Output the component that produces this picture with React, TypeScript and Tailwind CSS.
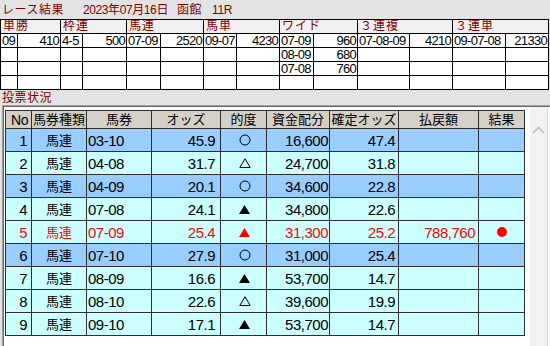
import React from "react";

const FONT = { fontFamily: '"Liberation Sans", "Noto Sans CJK JP", sans-serif' };

const topHeaders = ["単勝", "枠連", "馬連", "馬単", "ワイド", "３連複", "３連単"];
const topRows: string[][] = [
  ["09", "410", "4-5", "500", "07-09", "2520", "09-07", "4230", "07-09", "960", "07-08-09", "4210", "09-07-08", "21330"],
  ["", "", "", "", "", "", "", "", "08-09", "680", "", "", "", ""],
  ["", "", "", "", "", "", "", "", "07-08", "760", "", "", "", ""],
  ["", "", "", "", "", "", "", "", "", "", "", "", "", ""],
];

type Mark = "o" | "tri" | "fill";
type Row = { no: number; horse: string; odds: string; mark: Mark; money: string; fixed: string; pay?: string; hit?: boolean; blue: boolean };

const rows: Row[] = [
  { no: 1, horse: "03-10", odds: "45.9", mark: "o", money: "16,600", fixed: "47.4", blue: true },
  { no: 2, horse: "04-08", odds: "31.7", mark: "tri", money: "24,700", fixed: "31.8", blue: false },
  { no: 3, horse: "04-09", odds: "20.1", mark: "o", money: "34,600", fixed: "22.8", blue: true },
  { no: 4, horse: "07-08", odds: "24.1", mark: "fill", money: "34,800", fixed: "22.6", blue: false },
  { no: 5, horse: "07-09", odds: "25.4", mark: "fill", money: "31,300", fixed: "25.2", pay: "788,760", hit: true, blue: false },
  { no: 6, horse: "07-10", odds: "27.9", mark: "o", money: "31,000", fixed: "25.4", blue: true },
  { no: 7, horse: "08-09", odds: "16.6", mark: "fill", money: "53,700", fixed: "14.7", blue: false },
  { no: 8, horse: "08-10", odds: "22.6", mark: "tri", money: "39,600", fixed: "19.9", blue: false },
  { no: 9, horse: "09-10", odds: "17.1", mark: "fill", money: "53,700", fixed: "14.7", blue: false },
];

function MarkIcon({ mark, red }: { mark: Mark; red: boolean }) {
  const c = red ? "#ff0000" : "#000000";
  if (mark === "o")
    return (
      <svg width="12" height="12" viewBox="0 0 12 12">
        <circle cx="6" cy="6" r="5" fill="none" stroke={c} strokeWidth="1" />
      </svg>
    );
  if (mark === "tri")
    return (
      <svg width="12" height="10" viewBox="0 0 12 10">
        <polygon points="6,0.8 11.2,9.5 0.8,9.5" fill="none" stroke={c} strokeWidth="1" />
      </svg>
    );
  return (
    <svg width="11" height="9" viewBox="0 0 11 9">
      <polygon points="5.5,0 11,9 0,9" fill={c} />
    </svg>
  );
}

export default function App() {
  return (
    <div className="w-[550px] h-[346px] overflow-hidden bg-[#e3e3e3] flex flex-col" style={FONT}>
      {/* title row */}
      <div className="h-[19px] flex items-center text-[#800000] text-[12px] leading-none">
        <span className="w-[83px] pl-[2px] tracking-[0.5px]">レース結果</span>
        <span className="tracking-[-0.4px]">2023年07月16日</span>
        <span className="ml-[9px] tracking-[0.5px]">函館</span>
        <span className="ml-[10px] tracking-[-0.3px]">11R</span>
      </div>

      {/* top result table */}
      <div className="w-[549px] grid grid-cols-[16px_42px_21px_43px_33px_42px_32px_42px_33px_43px_51px_42px_52px_42px] grid-rows-[13px_13px_13px_13px_13px] gap-px bg-black p-px">
        {topHeaders.map((h) => (
          <div key={h} className="col-span-2 bg-[#f0f0f0] text-[#800000] text-[12px] leading-[13px] pl-[2px] tracking-[1px] whitespace-nowrap overflow-hidden">
            {h}
          </div>
        ))}
        {topRows.map((r, ri) =>
          r.map((v, ci) => (
            <div
              key={`${ri}-${ci}`}
              className={`bg-white text-black text-[13px] leading-[13px] tracking-[-0.7px] whitespace-nowrap overflow-hidden ${ci % 2 === 0 ? "text-left pl-px" : "text-right pr-px"}`}
            >
              {v}
            </div>
          ))
        )}
      </div>

      {/* label */}
      <div className="h-[14px] mt-px flex items-center text-[#800000] text-[12px] leading-none pl-[2px] tracking-[0.5px]">
        投票状況
      </div>

      {/* panel */}
      <div className="flex-1 ml-[2px] border-l border-t border-[#a0a0a0] flex">
        <div className="flex-1 border-l border-t border-[#696969] bg-white flex">
          <div className="pl-px pt-[3px]">
            <div className="w-[520px] grid grid-cols-[25px_54px_64px_68px_45px_62px_68px_79px_45px] grid-rows-[17px_repeat(9,22px)] gap-px bg-[#2e2e2e] p-px">
              {["No", "馬券種類", "馬券", "オッズ", "的度", "資金配分", "確定オッズ", "払戻額", "結果"].map((h, i) => (
                <div
                  key={h}
                  className={`bg-[#d4d0c8] text-black flex items-center text-[13px] leading-none whitespace-nowrap ${i === 0 ? "justify-end pr-[3px] text-[14px] tracking-[-0.5px]" : "justify-center"}`}
                >
                  {h}
                </div>
              ))}
              {rows.map((r) => {
                const bg = r.blue ? "bg-[#99ccff]" : "bg-[#ccffff]";
                const tc = r.hit ? "text-[#ff0000]" : "text-black";
                const num = `${bg} ${tc} flex items-center text-[15px] leading-none tracking-[-0.5px] whitespace-nowrap`;
                return (
                  <React.Fragment key={r.no}>
                    <div className={`${num} justify-end pr-[4px]`}>{r.no}</div>
                    <div className={`${bg} ${tc} flex items-center justify-center text-[13px] leading-none`}>馬連</div>
                    <div className={`${num} justify-start pl-px`}>{r.horse}</div>
                    <div className={`${num} justify-end pr-[5px]`}>{r.odds}</div>
                    <div className={`${bg} flex items-center justify-center pl-[2px]`}>
                      <MarkIcon mark={r.mark} red={!!r.hit} />
                    </div>
                    <div className={`${num} justify-end pr-px`}>{r.money}</div>
                    <div className={`${num} justify-end pr-[3px]`}>{r.fixed}</div>
                    <div className={`${num} justify-end pr-[3px]`}>{r.pay ?? ""}</div>
                    <div className={`${bg} flex items-center justify-center`}>
                      {r.hit ? <div className="w-[10px] h-[10px] rounded-full bg-[#ff0000]" /> : null}
                    </div>
                  </React.Fragment>
                );
              })}
            </div>
          </div>
          <div className="w-[5px]" />
          <div className="w-[17px] bg-[#f2f2f2] flex justify-center">
            <svg className="mt-[19px]" width="13" height="8" viewBox="0 0 13 8">
              <polyline points="1,7 6.5,1.5 12,7" fill="none" stroke="#bdbdbd" strokeWidth="1.6" />
            </svg>
          </div>
          <div className="w-[3px] border-l border-[#d6d6d6] bg-white" />
        </div>
      </div>
    </div>
  );
}
